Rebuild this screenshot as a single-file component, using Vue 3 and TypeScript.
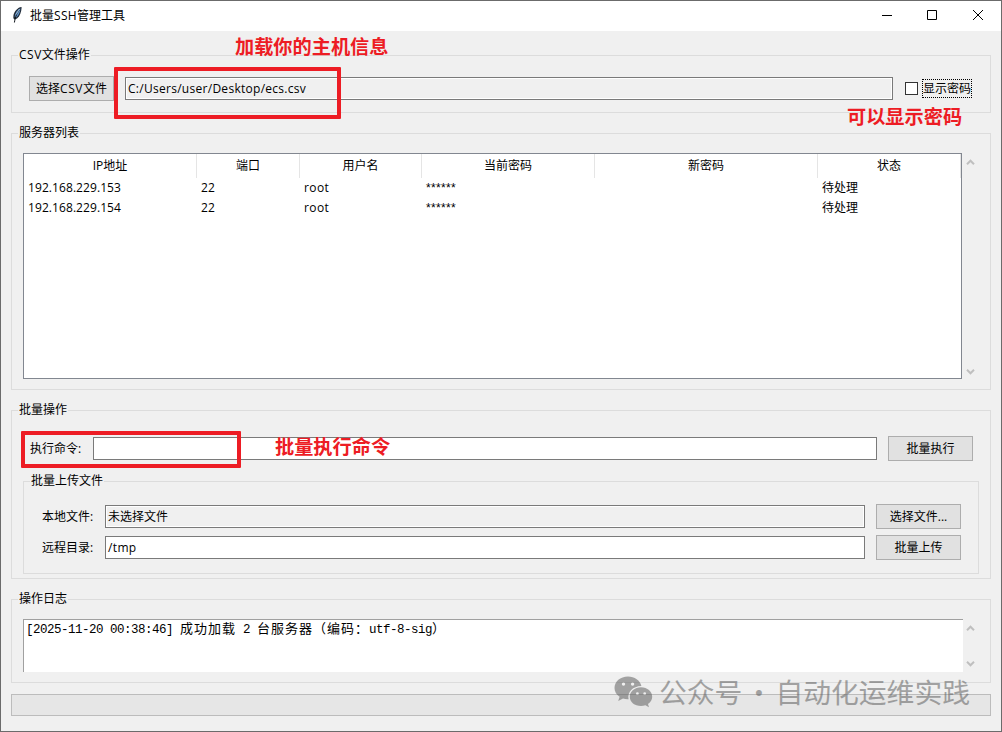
<script setup lang="ts">
interface Server { ip: string; port: number; user: string; current: string; next: string; status: string }
const columns: string[] = ['IP地址', '端口', '用户名', '当前密码', '新密码', '状态']
const servers: Server[] = [
  { ip: '192.168.229.153', port: 22, user: 'root', current: '******', next: '', status: '待处理' },
  { ip: '192.168.229.154', port: 22, user: 'root', current: '******', next: '', status: '待处理' },
]
</script>

<template>
  <div class="window">
    <header class="titlebar">
      <svg class="feather" width="12" height="18" viewBox="0 0 12 18">
        <path d="M10.400 1C6.800 1.400 3.600 5 2.500 9L2.300 12.200L3.600 13.600L6 12.400C8.900 10 10.400 6 10.600 1.400Z" fill="#1d2733" />
        <path d="M9.400 2.200C6.800 3.400 4.400 6.600 3.600 10.400L5.400 11.400C8 8.800 9.400 5.600 9.400 2.200Z" fill="#5f93cb" />
        <path d="M8.600 3.600C6.400 6.600 4.400 10 3.400 16.500" fill="none" stroke="#10151c" stroke-width="1" />
        <path d="M8.600 3L5 8.600" fill="none" stroke="#b9d5ef" stroke-width=".8" />
      </svg>
      <h1>批量<span class="ssh">SSH</span>管理工具</h1>
      <div class="controls">
        <svg width="12" height="12" viewBox="0 0 12 12"><path d="M2 6.500H12" /></svg>
        <svg width="12" height="12" viewBox="0 0 12 12"><path d="M1.500 1.500H10.500V10.500H1.500Z" /></svg>
        <svg width="12" height="12" viewBox="0 0 12 12"><path d="M1 1L11 11M11 1L1 11" /></svg>
      </div>
    </header>

    <main>
      <section class="group csv">
        <h2><span class="latin">CSV</span>文件操作</h2>
        <button class="btn">选择<span class="latin">CSV</span>文件</button>
        <div class="field readonly path">C:/Users/user/Desktop/ecs.csv</div>
        <div class="check"><i></i><span>显示密码</span></div>
      </section>

      <section class="group list">
        <h2>服务器列表</h2>
        <div class="table">
          <div class="row head"><div v-for="c in columns" :key="c">{{ c }}</div></div>
          <div v-for="s in servers" :key="s.ip" class="row">
            <div class="ip">{{ s.ip }}</div><div class="ip">{{ s.port }}</div><div class="user">{{ s.user }}</div>
            <div class="mask">{{ s.current }}</div><div>{{ s.next }}</div><div>{{ s.status }}</div>
          </div>
        </div>
        <div class="scroll">
          <svg width="9" height="7" viewBox="0 0 9 7"><path d="M1 5.200L4.500 1.700L8 5.200" /></svg>
          <svg width="9" height="7" viewBox="0 0 9 7"><path d="M1 1.800L4.500 5.300L8 1.800" /></svg>
        </div>
      </section>

      <section class="group batch">
        <h2>批量操作</h2>
        <div class="line">
          <label>执行命令:</label>
          <div class="field"></div>
          <button class="btn">批量执行</button>
        </div>
        <section class="group upload">
          <h2>批量上传文件</h2>
          <div class="line">
            <label>本地文件:</label>
            <div class="field readonly">未选择文件</div>
            <button class="btn">选择文件...</button>
          </div>
          <div class="line">
            <label>远程目录:</label>
            <div class="field remote">/tmp</div>
            <button class="btn">批量上传</button>
          </div>
        </section>
      </section>

      <section class="group logs">
        <h2>操作日志</h2>
        <div class="log">[2025-11-20 00:38:46] <b>成功加载</b> 2 <b>台服务器（编码：</b>utf-8-sig<b>）</b></div>
        <div class="scroll">
          <svg width="9" height="7" viewBox="0 0 9 7"><path d="M1 5.200L4.500 1.700L8 5.200" /></svg>
          <svg width="9" height="7" viewBox="0 0 9 7"><path d="M1 1.800L4.500 5.300L8 1.800" /></svg>
        </div>
      </section>

      <div class="progress"></div>
    </main>

    <div class="frame frame-path"></div>
    <div class="frame frame-command"></div>
    <div class="note note-load">加载你的主机信息</div>
    <div class="note note-show">可以显示密码</div>
    <div class="note note-run">批量执行命令</div>

    <div class="watermark">
      <svg width="40" height="32" viewBox="0 0 40 32">
        <path fill-rule="evenodd" d="M14 .5C6.300 .5 .5 5.600 .5 12C.5 15.600 2.400 18.600 5.600 20.800L4.200 25L9 22.600C10.800 23.200 12.500 23.400 14.600 23.300C13 16 19 10.200 27.400 10C26.200 4.400 20.500 .5 14 .5ZM9.500 6.400A1.700 1.700 0 1 1 9.500 9.800A1.700 1.700 0 1 1 9.500 6.400ZM18.600 6.400A1.700 1.700 0 1 1 18.600 9.800A1.700 1.700 0 1 1 18.600 6.400Z" />
        <path fill-rule="evenodd" d="M27 11.200C20.600 11.200 15.800 15.500 15.800 20.700C15.800 26 20.600 30 27 30C28.500 30 30 29.800 31.400 29.300L35 31.200L34 28C36.700 26.200 38.200 23.600 38.200 20.700C38.200 15.500 33.400 11.200 27 11.200ZM23.400 16.300A1.400 1.400 0 1 1 23.400 19.100A1.400 1.400 0 1 1 23.400 16.300ZM30.700 16.300A1.400 1.400 0 1 1 30.700 19.100A1.400 1.400 0 1 1 30.700 16.300Z" />
      </svg>
      <span>公众号</span><span class="wm-dot">·</span><span>自动化运维实践</span>
    </div>
  </div>
</template>

<style>
body { margin: 0; background: #f0f0f0; }
</style>

<style scoped>
* { box-sizing: border-box; }
.window { position: relative; width: 1002px; height: 732px; overflow: hidden; border: 1px solid #6b6b6b; background: #f0f0f0; color: #000; font: 12px/18px "Open Sans", "Noto Sans CJK SC", sans-serif; }
h1, h2 { margin: 0; font-size: 12px; font-weight: 400; white-space: nowrap; }
.titlebar { display: flex; align-items: center; height: 30px; padding: 0 17px 0 10px; background: #fff; }
.feather { margin: 0 7px 2px 0; }
.ssh { letter-spacing: .3px; }
.latin { letter-spacing: .5px; }
.controls { display: flex; gap: 34px; margin: 0 0 2px auto; }
.controls svg { fill: none; stroke: #000; stroke-width: 1; }
main { display: flex; flex-direction: column; padding: 24px 10px 0; }
.group { position: relative; border: 1px solid #dcdcdc; }
.group > h2 { position: absolute; top: -10px; left: 6px; padding: 0 1px; line-height: 18px; background: #f0f0f0; }
.csv { display: flex; align-items: flex-start; height: 58px; padding: 20px 18px 0 17px; }
.btn { flex: none; width: 85px; height: 25px; padding: 0; border: 1px solid #adadad; border-radius: 0; background: #e1e1e1; color: #000; font: inherit; line-height: 23px; white-space: nowrap; }
.field { flex: 1; height: 23px; padding-left: 2px; border: 1px solid #7a7a7a; background: #fff; line-height: 21px; white-space: nowrap; }
.readonly { background: #f0f0f0; box-shadow: inset 0 0 0 1px #fff; }
.path { margin: 1px 12px 0 11px; letter-spacing: .28px; }
.remote { letter-spacing: .35px; }
.check { display: flex; align-items: center; gap: 4px; margin-top: 3px; }
.check i { width: 13px; height: 13px; border: 1px solid #333; background: #fff; }
.check span { width: 50px; height: 19px; border: 1px dotted #000; line-height: 17px; white-space: nowrap; }
.list { display: flex; height: 257px; margin-top: 20px; padding: 19px 11px 0; }
.table { width: 939px; height: 226px; border: 1px solid #828790; background: #fff; }
.row { display: grid; grid-template-columns: 173px 103px 122px 173px 223px 143px; height: 20px; line-height: 20px; }
.row > div { padding-left: 4px; white-space: nowrap; }
.head { height: 24px; line-height: 24px; }
.row.head > div { padding: 0; border-right: 1px solid #e5e5e5; text-align: center; }
.ip { letter-spacing: .08px; }
.user { letter-spacing: .4px; }
.row > .mask { font-family: "Liberation Sans", sans-serif; letter-spacing: .35px; }
.scroll { display: flex; flex: 1; flex-direction: column; align-items: center; justify-content: space-between; height: 226px; padding: 6px 0 4px; }
.scroll svg { fill: none; stroke: #bfbfbf; stroke-width: 2; }
.batch { height: 169px; margin-top: 20px; padding: 25px 11px 0; }
.line { display: flex; align-items: center; height: 25px; }
.line .btn { margin-left: 11px; }
.line label { flex: none; width: 64px; padding-left: 1px; white-space: nowrap; }
.batch > .line { padding: 0 6px; }
.upload { height: 93px; margin-top: 20px; padding: 22px 17px 0; }
.upload .line + .line { margin-top: 6px; }
.logs { display: flex; height: 84px; margin-top: 20px; padding: 19px 11px 0; }
.logs .scroll { height: 53px; padding: 6px 2px 5px 0; }
.log { width: 940px; height: 53px; padding: 0 2px; border-top: 1px solid #a0a0a0; border-left: 1px solid #a0a0a0; background: #fff; font: 12.5px/15px "Liberation Mono", monospace; letter-spacing: -.5px; white-space: pre; }
.log b { font: 13px/15px "Noto Sans CJK SC", sans-serif; letter-spacing: 1px; }
.progress { height: 22px; margin-top: 11px; border: 1px solid #bcbcbc; background: #e6e6e6; }
.frame { position: absolute; border: 4px solid #ed1c24; border-radius: 1px; }
.frame-path { left: 113px; top: 66px; width: 227px; height: 52px; }
.frame-command { left: 20px; top: 430px; width: 220px; height: 37px; }
.note { position: absolute; color: #ed1c24; font: 700 19.2px/26px "Noto Sans CJK SC", sans-serif; white-space: nowrap; }
.note-load { left: 234px; top: 32px; }
.note-show { left: 846px; top: 102px; }
.note-run { left: 274px; top: 432px; }
.watermark { position: absolute; left: 613px; top: 674px; display: flex; color: #555; opacity: .5; font: 27.8px/32px "Noto Sans CJK SC", sans-serif; white-space: nowrap; }
.watermark svg { margin: 1px 5px 0 0; fill: #555; }
.wm-dot { width: 33px; text-align: center; }
</style>
